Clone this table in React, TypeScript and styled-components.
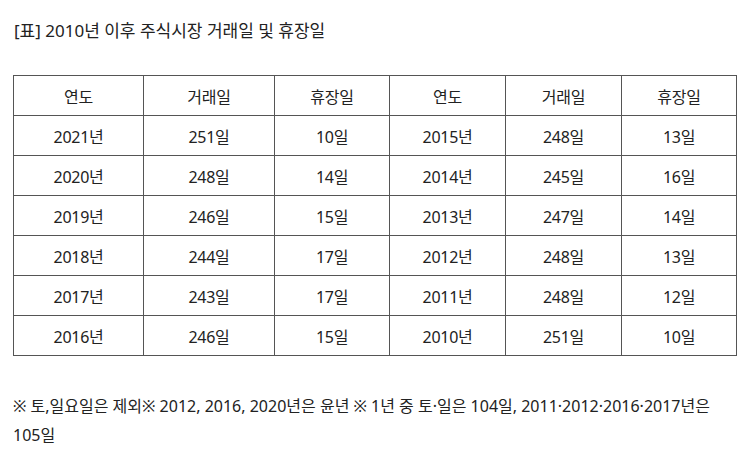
import React from "react";
import styled, { createGlobalStyle } from "styled-components";

const GlobalStyle = createGlobalStyle`
  body {
    margin: 0;
    background: #ffffff;
    font-family: "Noto Sans", "Noto Sans CJK KR", sans-serif;
    color: #222222;
  }
`;

type Row = [string, string, string, string, string, string];

const rows: Row[] = [
  ["2021년", "251일", "10일", "2015년", "248일", "13일"],
  ["2020년", "248일", "14일", "2014년", "245일", "16일"],
  ["2019년", "246일", "15일", "2013년", "247일", "14일"],
  ["2018년", "244일", "17일", "2012년", "248일", "13일"],
  ["2017년", "243일", "17일", "2011년", "248일", "12일"],
  ["2016년", "246일", "15일", "2010년", "251일", "10일"],
];

const headers = ["연도", "거래일", "휴장일", "연도", "거래일", "휴장일"];
const colWidths = [130, 131, 115, 116, 116, 115];

const App = () => {
  return (
    <SPage>
      <GlobalStyle />
      <STitle>[표] 2010년 이후 주식시장 거래일 및 휴장일</STitle>
      <STable>
        <colgroup>
          {colWidths.map((w, i) => (
            <col key={i} style={{ width: w }} />
          ))}
        </colgroup>
        <thead>
          <tr>
            {headers.map((h, i) => (
              <SCell as="th" key={i}>
                {h}
              </SCell>
            ))}
          </tr>
        </thead>
        <tbody>
          {rows.map((r, i) => (
            <tr key={i}>
              {r.map((c, j) => (
                <SCell key={j}>{c}</SCell>
              ))}
            </tr>
          ))}
        </tbody>
      </STable>
      <SNote>
        ※ 토,일요일은 제외※ 2012, 2016, 2020년은 윤년 ※ 1년 중 토·일은 104일, 2011·2012·2016·2017년은 105일
      </SNote>
    </SPage>
  );
};

export default App;

const SPage = styled.div`
  padding: 17px 14px 0 13px;
  width: 723px;
`;

const STitle = styled.div`
  font-size: 17px;
  line-height: 27px;
  color: #222222;
  margin-left: 1px;
`;

const STable = styled.table`
  margin-top: 31px;
  border-collapse: collapse;
  table-layout: fixed;
  width: 723px;
  border: 1px solid #444444;
`;

const SCell = styled.td`
  height: 39px;
  padding: 0;
  border: 1px solid #555555;
  text-align: center;
  vertical-align: middle;
  font-size: 16px;
  font-weight: normal;
  letter-spacing: -0.3px;
  color: #222222;
`;

const SNote = styled.p`
  margin: 36px 0 0 0;
  font-size: 16px;
  line-height: 29px;
  color: #222222;
`;
